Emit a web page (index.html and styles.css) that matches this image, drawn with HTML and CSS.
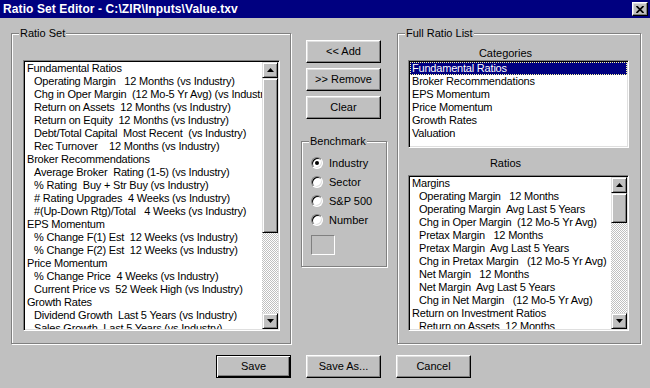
FILE: index.html
```html
<!DOCTYPE html>
<html>
<head>
<meta charset="utf-8">
<title>Ratio Set Editor</title>
<link rel="stylesheet" href="styles.css">
</head>
<body>
<div class="window">
  <div class="titlebar">
    <span class="title">Ratio Set Editor - C:\ZIR\Inputs\Value.txv</span>
    <span class="close"><svg width="8" height="7" viewBox="0 0 8 7"><path d="M0.5 0 L7.5 7 M7.5 0 L0.5 7" stroke="#000" stroke-width="1.7" fill="none"/></svg></span>
  </div>
  <div class="content">
    <div class="group group-left">
      <span class="legend">Ratio Set</span>
      <div class="listbox list-set">
        <div class="items">
<div class="row">Fundamental Ratios</div>
<div class="row sub">Operating Margin   12 Months (vs Industry)</div>
<div class="row sub">Chg in Oper Margin  (12 Mo-5 Yr Avg) (vs Industry)</div>
<div class="row sub">Return on Assets  12 Months (vs Industry)</div>
<div class="row sub">Return on Equity  12 Months (vs Industry)</div>
<div class="row sub">Debt/Total Capital  Most Recent  (vs Industry)</div>
<div class="row sub">Rec Turnover    12 Months (vs Industry)</div>
<div class="row">Broker Recommendations</div>
<div class="row sub">Average Broker  Rating (1-5) (vs Industry)</div>
<div class="row sub">% Rating  Buy + Str Buy (vs Industry)</div>
<div class="row sub"># Rating Upgrades  4 Weeks (vs Industry)</div>
<div class="row sub">#(Up-Down Rtg)/Total   4 Weeks (vs Industry)</div>
<div class="row">EPS Momentum</div>
<div class="row sub">% Change F(1) Est  12 Weeks (vs Industry)</div>
<div class="row sub">% Change F(2) Est  12 Weeks (vs Industry)</div>
<div class="row">Price Momentum</div>
<div class="row sub">% Change Price  4 Weeks (vs Industry)</div>
<div class="row sub">Current Price vs  52 Week High (vs Industry)</div>
<div class="row">Growth Rates</div>
<div class="row sub">Dividend Growth  Last 5 Years (vs Industry)</div>
<div class="row sub">Sales Growth  Last 5 Years (vs Industry)</div>
        </div>
        <div class="scrollbar">
          <div class="sb-btn"><svg width="7" height="4" viewBox="0 0 7 4"><path d="M3.5 0 L7 4 L0 4Z" fill="#000"/></svg></div>
          <div class="sb-thumb thumb-left"></div>
          <div class="sb-track"></div>
          <div class="sb-btn"><svg width="7" height="4" viewBox="0 0 7 4"><path d="M0 0 L7 0 L3.5 4Z" fill="#000"/></svg></div>
        </div>
      </div>
    </div>

    <div class="middle">
      <button class="btn">&lt;&lt; Add</button>
      <button class="btn">&gt;&gt; Remove</button>
      <button class="btn">Clear</button>
      <div class="group group-bench">
        <span class="legend">Benchmark</span>
        <div class="radio-row"><span class="radio checked"></span><span>Industry</span></div>
        <div class="radio-row"><span class="radio"></span><span>Sector</span></div>
        <div class="radio-row"><span class="radio"></span><span>S&amp;P 500</span></div>
        <div class="radio-row"><span class="radio"></span><span>Number</span></div>
        <div class="swatch"></div>
      </div>
    </div>

    <div class="group group-right">
      <span class="legend">Full Ratio List</span>
      <div class="caption cap-cat">Categories</div>
      <div class="listbox list-cat">
        <div class="items">
<div class="row selected">Fundamental Ratios</div>
<div class="row">Broker Recommendations</div>
<div class="row">EPS Momentum</div>
<div class="row">Price Momentum</div>
<div class="row">Growth Rates</div>
<div class="row">Valuation</div>
        </div>
      </div>
      <div class="caption cap-ratios">Ratios</div>
      <div class="listbox list-ratios">
        <div class="items">
<div class="row">Margins</div>
<div class="row sub">Operating Margin   12 Months</div>
<div class="row sub">Operating Margin  Avg Last 5 Years</div>
<div class="row sub">Chg in Oper Margin  (12 Mo-5 Yr Avg)</div>
<div class="row sub">Pretax Margin   12 Months</div>
<div class="row sub">Pretax Margin  Avg Last 5 Years</div>
<div class="row sub">Chg in Pretax Margin   (12 Mo-5 Yr Avg)</div>
<div class="row sub">Net Margin   12 Months</div>
<div class="row sub">Net Margin  Avg Last 5 Years</div>
<div class="row sub">Chg in Net Margin   (12 Mo-5 Yr Avg)</div>
<div class="row">Return on Investment Ratios</div>
<div class="row sub">Return on Assets  12 Months</div>
        </div>
        <div class="scrollbar">
          <div class="sb-btn"><svg width="7" height="4" viewBox="0 0 7 4"><path d="M3.5 0 L7 4 L0 4Z" fill="#000"/></svg></div>
          <div class="sb-thumb thumb-right"></div>
          <div class="sb-track"></div>
          <div class="sb-btn"><svg width="7" height="4" viewBox="0 0 7 4"><path d="M0 0 L7 0 L3.5 4Z" fill="#000"/></svg></div>
        </div>
      </div>
    </div>
  </div>

  <div class="footer">
    <button class="btn default">Save</button>
    <button class="btn">Save As...</button>
    <button class="btn">Cancel</button>
  </div>
</div>
</body>
</html>
```

FILE: styles.css
```css
html, body {
  margin: 0;
  padding: 0;
}
body {
  width: 650px;
  height: 388px;
  overflow: hidden;
  background: #c0c0c0;
  font-family: "Liberation Sans", Arial, sans-serif;
  font-size: 11px;
  color: #000;
}
.window {
  width: 650px;
  height: 388px;
  background: #c0c0c0;
}
.titlebar {
  height: 18px;
  background: #000080;
  display: flex;
  align-items: center;
  justify-content: space-between;
  padding: 0 2px 0 3px;
  box-sizing: border-box;
}
.title {
  color: #fff;
  font-weight: bold;
  font-size: 12px;
  letter-spacing: 0.1px;
  white-space: nowrap;
}
.close {
  width: 16px;
  height: 14px;
  box-sizing: border-box;
  background: #c0c0c0;
  border: 1px solid;
  border-color: #fff #000 #000 #fff;
  box-shadow: inset -1px -1px #808080, inset 1px 1px #dfdfdf;
  display: flex;
  align-items: center;
  justify-content: center;
}
.close svg { display: block; }

.content {
  display: flex;
  align-items: flex-start;
  padding: 15px 0 0 11px;
}
.group {
  position: relative;
  box-sizing: border-box;
  border: 1px solid #808080;
  box-shadow: inset 1px 1px #fff, 1px 1px #fff;
}
.legend {
  position: absolute;
  top: -8px;
  left: 7px;
  background: #c0c0c0;
  padding: 0 1px;
  line-height: 14px;
  white-space: nowrap;
}
.group-left {
  width: 280px;
  height: 311px;
  padding: 26px 0 0 11px;
}
.listbox {
  box-sizing: border-box;
  display: flex;
  background: #fff;
  border: 1px solid;
  border-color: #808080 #fff #fff #808080;
  padding: 1px;
  box-shadow: inset 1px 1px #000, inset -1px -1px #dfdfdf;
  overflow: hidden;
}
.list-set { width: 257px; height: 271px; }
.items {
  flex: 1;
  overflow: hidden;
  min-width: 0;
}
.row {
  height: 13px;
  line-height: 13px;
  padding-left: 2px;
  white-space: pre;
  letter-spacing: -0.2px;
}
.row.sub { padding-left: 9px; }
.row.selected {
  background: #000080;
  color: #fff;
  outline: 1px dotted #ffffa0;
  outline-offset: -1px;
}
.scrollbar {
  width: 16px;
  display: flex;
  flex-direction: column;
  background-color: #c0c0c0;
  background-image: conic-gradient(#fff 25%, #c0c0c0 0 50%, #fff 0 75%, #c0c0c0 0);
  background-size: 2px 2px;
}
.sb-btn, .sb-thumb {
  box-sizing: border-box;
  background: #c0c0c0;
  border: 1px solid;
  border-color: #dfdfdf #000 #000 #dfdfdf;
  box-shadow: inset 1px 1px #fff, inset -1px -1px #808080;
}
.sb-btn {
  height: 16px;
  display: flex;
  align-items: center;
  justify-content: center;
}
.sb-btn svg { display: block; }
.thumb-left { height: 155px; }
.thumb-right { height: 30px; }
.sb-track { flex: 1; }

.middle {
  width: 86px;
  margin-left: 10px;
  padding-top: 7px;
  display: flex;
  flex-direction: column;
  align-items: flex-start;
}
.btn {
  width: 75px;
  height: 23px;
  box-sizing: border-box;
  font: inherit;
  color: #000;
  background: #c0c0c0;
  border: 1px solid;
  border-color: #fff #000 #000 #fff;
  box-shadow: inset -1px -1px #808080, inset 1px 1px #dfdfdf;
  padding: 0;
  margin: 0;
  text-align: center;
  line-height: 19px;
}
.middle .btn {
  margin-left: 5px;
  margin-bottom: 5px;
}
.btn.default {
  border-color: #000;
  box-shadow: inset 1px 1px #fff, inset -1px -1px #000, inset -2px -2px #808080;
}
.group-bench {
  width: 86px;
  height: 126px;
  margin-top: 17px;
  padding: 11px 0 0 9px;
}
.radio-row {
  height: 19px;
  display: flex;
  align-items: center;
  white-space: nowrap;
}
.radio {
  position: relative;
  width: 12px;
  height: 12px;
  box-sizing: border-box;
  border-radius: 50%;
  border: 1px solid;
  border-color: #808080 #fff #fff #808080;
  background: #fff;
  box-shadow: inset 1px 1px #000, inset -1px -1px #dfdfdf;
  margin-right: 6px;
  flex: none;
}
.radio.checked::after {
  content: "";
  position: absolute;
  left: 3px;
  top: 3px;
  width: 4px;
  height: 4px;
  border-radius: 50%;
  background: #000;
}
.swatch {
  width: 24px;
  height: 20px;
  box-sizing: border-box;
  margin-top: 6px;
  border: 1px solid;
  border-color: #808080 #fff #fff #808080;
}

.group-right {
  width: 244px;
  height: 311px;
  margin-left: 10px;
  padding: 12px 0 0 10px;
}
.caption {
  width: 221px;
  box-sizing: border-box;
  padding-right: 26px;
  text-align: center;
  line-height: 14px;
}
.cap-cat { height: 14px; }
.cap-ratios { height: 27px; padding-top: 8px; }
.list-cat { width: 221px; height: 88px; }
.list-ratios { width: 221px; height: 156px; }

.footer {
  display: flex;
  gap: 15px;
  padding: 11px 0 0 216px;
}
```
